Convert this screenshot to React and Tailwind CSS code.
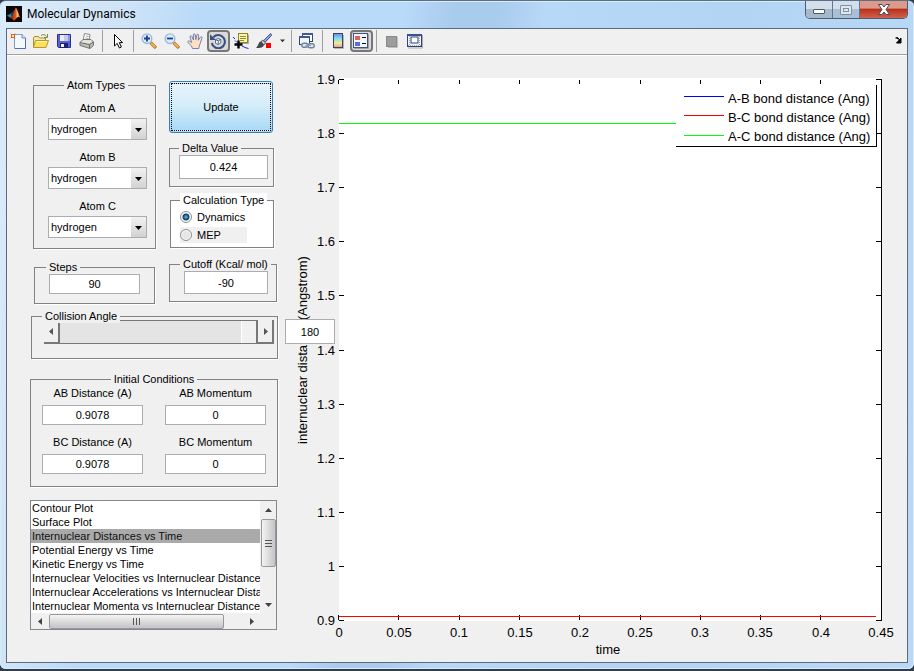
import React, { useState } from "react";

const EDIT =
  "block border border-[#abadb3] bg-white text-center text-[11px] leading-[14px] text-black outline-none";
const GROUP = "min-w-0 border border-[#828282] shadow-[1px_1px_0_#fff]";
const LEGEND = "px-[3px] leading-[14px] whitespace-nowrap bg-[#f0f0f0]";

function MatlabLogo() {
  return (
    <svg width="16" height="16" viewBox="0 0 16 16" aria-hidden="true">
      <defs>
        <linearGradient id="flame" x1="0" y1="0" x2="1" y2="0">
          <stop offset="0" stopColor="#8c1a08" />
          <stop offset="0.5" stopColor="#e8571c" />
          <stop offset="0.65" stopColor="#ffc06a" />
          <stop offset="1" stopColor="#a32a0c" />
        </linearGradient>
      </defs>
      <rect width="16" height="16" fill="#0a0806" />
      <path d="M1 9.5L5 7.5L8 4.5L6.5 10.5L4.5 12Z" fill="#3a7d9c" />
      <path d="M5 7.5L7.5 5L9 2L7 10L5.5 11Z" fill="#1c3a55" />
      <path d="M4.5 12C7 11 8 5 9.7 1.5C11.5 3 12.5 9 15 12.2C13.5 11 12 10.6 10.6 12C9.5 13 9 14.5 7.6 14.5C6.5 13.5 6 12 4.5 12Z" fill="url(#flame)" />
    </svg>
  );
}

const icons = {
  new: (
    <>
      <path d="M4.5 1.5H12L15.5 5V15.5H4.5Z" fill="#f4f8ff" stroke="#7f9bcf" />
      <path d="M15.5 5V15.5H5" fill="none" stroke="#4d6fb5" />
      <path d="M12 1.5V5H15.5" fill="#d3e0f8" stroke="#6e8cc5" />
      <path d="M0.5 0.5L5.5 5.5M5.5 0.5L0.5 5.5" stroke="#e0a070" />
      <rect x="1.5" y="1.5" width="3" height="3" fill="#fff1b0" stroke="#d0602a" strokeWidth="1" />
    </>
  ),
  open: (
    <>
      <path d="M0.5 14.5V4.5L2 3.5H5.5L6.5 5H12.5V14" fill="#f6e9a2" stroke="#a98f2c" />
      <path d="M8 2.5C10 1 12 1.5 13.5 3.5M14.5 1V4.5H11" fill="none" stroke="#7b8a45" />
      <path d="M0.5 14.5L2.5 7.5H15.5L13 14.5Z" fill="#fbe05f" stroke="#b8962a" />
      <path d="M3.5 8.5H14" stroke="#fff6bd" />
    </>
  ),
  save: (
    <>
      <path d="M1.5 1.5H14.5V14.5H2.5L1.5 13.5Z" fill="#5a61d2" stroke="#2b2f91" />
      <rect x="4" y="2" width="8" height="6" fill="#e8ecfa" />
      <rect x="8" y="2" width="4" height="6" fill="#c4cbe8" />
      <rect x="12" y="2" width="2" height="6" fill="#9095e4" />
      <rect x="4" y="10" width="8" height="5" fill="#1d2270" />
      <rect x="5" y="11" width="3" height="3" fill="#f4f6ff" />
    </>
  ),
  print: (
    <>
      <path d="M4 8L5.5 0.5L11 1.5L10 8" fill="#fff" stroke="#888" />
      <path d="M7 3L9.6 3.6M6.4 5L9.4 5.6" stroke="#aaa" />
      <path d="M1 9.5L4 6.5H12L14.5 9V12.5L11 15.5L1 12.5Z" fill="#b9b9b5" stroke="#777" />
      <path d="M1 9.5L10.5 11.5L14.5 9M10.5 11.5V15" fill="none" stroke="#666" />
      <path d="M2 9.2L4.3 7H11.7L13.5 8.8L10.4 10.7Z" fill="#e2e2de" />
      <rect x="7" y="12" width="2" height="1" fill="#e3cf3e" />
    </>
  ),
  pointer: <path d="M4.5 1.5V13L7.2 10.4L9.4 15L11.4 14L9.3 9.6H12.5Z" fill="#fff" stroke="#000" />,
  zoomin: (
    <>
      <path d="M9.5 9.5L15 15" stroke="#a8752a" strokeWidth="3.2" />
      <path d="M10 10L14.4 14.2" stroke="#f5b04a" strokeWidth="2" />
      <circle cx="6" cy="5.7" r="4.8" fill="#d9f0fb" stroke="#9db6e2" strokeWidth="1.4" />
      <path d="M3 5.5H9M6 2.5V8.5" stroke="#1b3c8c" strokeWidth="1.8" />
    </>
  ),
  zoomout: (
    <>
      <path d="M9.5 9.5L15 15" stroke="#a8752a" strokeWidth="3.2" />
      <path d="M10 10L14.4 14.2" stroke="#f5b04a" strokeWidth="2" />
      <circle cx="6" cy="5.7" r="4.8" fill="#d9f0fb" stroke="#9db6e2" strokeWidth="1.4" />
      <path d="M3 5.5H9" stroke="#1b3c8c" strokeWidth="1.8" />
    </>
  ),
  pan: (
    <path
      d="M5.5 15.5L4.5 13L0.8 9.4C0.5 8 2 7.4 3 8.4L4.6 9.6L3 4C3 2.6 4.4 2.4 5 3.6L6.5 7L6.3 1.8C6.6 0.4 8 0.4 8.3 1.8L8.8 6.6L9.8 2C10.2 0.8 11.6 1 11.6 2.4L11.3 7.2L13.4 4.2C14.2 3.2 15.5 4 15 5.2L13.2 10.5L12.3 13L11.8 15.5Z"
      fill="#fde0c0"
      stroke="#6478b0"
      strokeWidth="0.9"
    />
  ),
  rotate: (
    <>
      <path d="M3.4 4.2A6.6 6.6 0 1 1 1.8 10" fill="none" stroke="#3a5080" strokeWidth="2.1" />
      <path d="M0 1.2V7H6Z" fill="#3a5080" />
      <path d="M5.5 6.8L8 5.5L10.8 6.5V10L8.3 11.5L5.5 10.3ZM5.5 6.8L8.3 7.8L10.8 6.5M8.3 7.8V11.5" fill="#f6f8fc" stroke="#4c6088" strokeWidth="0.9" />
    </>
  ),
  data: (
    <>
      <path d="M15.5 1.5V10.5H7" fill="none" stroke="#a8a8a0" />
      <rect x="5.5" y="0.5" width="9" height="9" fill="#fbf6a4" stroke="#8b842c" />
      <path d="M7 3.5H13M7 5.5H13M7 7.5H11" stroke="#8f8a4a" />
      <path d="M0 4L2 6M2 7.5L4 9.5M9 13L12 14.5L15.5 15.5" fill="none" stroke="#1b25d4" />
      <path d="M1.5 11.5H9.5M5.5 7.5V15.5" stroke="#000" strokeWidth="2.4" />
    </>
  ),
  brush: (
    <>
      <path d="M14.6 0.6L7.5 7.8L9 9.4L15.6 2.2Z" fill="#a0acf0" stroke="#36408c" />
      <path d="M6.5 7L9.6 10L8 12L5 9Z" fill="#ccc" stroke="#555" />
      <path d="M5 8.6C2 9 3 12.5 0 14.8C3.5 15.5 7.5 15 8 11.8Z" fill="#43474e" />
      <rect x="10" y="10" width="5" height="5" fill="#fb0000" />
    </>
  ),
  link: (
    <>
      <rect x="3.5" y="0.5" width="10" height="8" fill="#fff" stroke="#2d477f" />
      <rect x="3" y="0" width="11" height="2" fill="#3c5a9a" />
      <rect x="0.5" y="3.5" width="10" height="8" fill="#f2f6fd" stroke="#2d477f" />
      <rect x="0" y="3" width="11" height="2" fill="#3c5a9a" />
      <rect x="2.8" y="10.2" width="6" height="4" rx="2" fill="#e4eaf2" stroke="#70849c" strokeWidth="1.4" />
      <rect x="9" y="10.8" width="6.2" height="4" rx="2" fill="#e4eaf2" stroke="#70849c" strokeWidth="1.4" />
      <path d="M6.5 12.4H12" stroke="#91a2b8" strokeWidth="1.4" />
    </>
  ),
  colorbar: (
    <>
      <defs>
        <linearGradient id="cbar" x1="0" y1="0" x2="0" y2="1">
          <stop offset="0" stopColor="#7489e8" />
          <stop offset="0.35" stopColor="#80dcef" />
          <stop offset="0.68" stopColor="#f2eb96" />
          <stop offset="1" stopColor="#f39a88" />
        </linearGradient>
      </defs>
      <path d="M13.5 2V15.5H4" fill="none" stroke="#b4b4b4" />
      <rect x="3.5" y="0.5" width="9" height="14" fill="url(#cbar)" stroke="#33436c" />
    </>
  ),
  legend: (
    <>
      <path d="M15.5 1V15.5H1" fill="none" stroke="#9aa0ac" />
      <rect x="0.5" y="0.5" width="14" height="14" fill="#f3f6fc" stroke="#425582" />
      <rect x="2" y="3" width="5" height="4" fill="#e3605b" />
      <rect x="2" y="9" width="5" height="4" fill="#6268e4" />
      <path d="M9 4.5H13M9 10.5H13" stroke="#111" />
    </>
  ),
  hide: (
    <>
      <path d="M13.5 4V14.5H4" fill="none" stroke="#c0c0c0" />
      <rect x="2.5" y="3.5" width="10" height="10" fill="#9d9d9d" stroke="#8a8a8a" />
    </>
  ),
  show: (
    <>
      <path d="M15.5 2V15H1" fill="none" stroke="#aaa" />
      <rect x="0.5" y="1.5" width="14" height="12" fill="#f3f5fb" stroke="#2f4576" />
      <path d="M0 2H15" stroke="#39538f" strokeWidth="2" />
      <path d="M2.5 3V13M12.5 3V13" stroke="#9ba9c5" strokeDasharray="1 1" />
      <rect x="4" y="4" width="7" height="6" fill="#fff" stroke="#2f4576" />
      <path d="M1 12.5H14" stroke="#a0a7b7" strokeDasharray="1 1" />
    </>
  ),
};

function Tool({ name, label, pressed }) {
  return (
    <button
      type="button"
      aria-label={label}
      aria-pressed={pressed}
      className={
        pressed
          ? "flex h-[22px] w-[23px] shrink-0 items-center rounded-[4px] border-2 border-[#777] bg-[#dadada] pl-px"
          : "flex h-[22px] w-[23px] shrink-0 items-center pl-[3px]"
      }
    >
      <svg width="16" height="16" viewBox="0 0 16 16" className="shrink-0" aria-hidden="true">
        {icons[name]}
      </svg>
    </button>
  );
}

function Divider() {
  return (
    <span className="flex w-2 shrink-0 pl-[3px]">
      <span className="h-[22px] w-px bg-[#a0a0a0]" />
    </span>
  );
}

function Arrow({ dir, size = 7, color = "#444" }) {
  const d = {
    up: "M0 5L3.5 1L7 5Z",
    down: "M0 2L3.5 6L7 2Z",
    left: "M5 0L1 3.5L5 7Z",
    right: "M2 0L6 3.5L2 7Z",
  }[dir];
  return (
    <svg width={size} height={size} viewBox="0 0 7 7" aria-hidden="true">
      <path d={d} fill={color} />
    </svg>
  );
}

function TitleBar() {
  return (
    <header className="flex h-[27px] items-start justify-between">
      <h1 className="flex items-center gap-[5px] pt-[5px] font-['Roboto','Open_Sans',sans-serif] text-[12px] leading-4 text-black">
        <MatlabLogo />
        Molecular Dynamics
      </h1>
      <div className="flex h-[18px] overflow-hidden rounded-b-[5px] border border-t-0 border-[#4e5d70]">
        <button type="button" aria-label="Minimize" className="flex w-[27px] items-center justify-center border-r border-[#66778c] bg-linear-to-b from-[#d3dfeb] from-45% to-[#a5b9cd] to-50%">
          <span className="mt-1 h-[5px] w-3 rounded-[1px] border border-[#4d5866] bg-white" />
        </button>
        <button type="button" aria-label="Maximize" className="flex w-[27px] items-center justify-center border-r border-[#66778c] bg-linear-to-b from-[#d3dfeb] from-45% to-[#a9bfd6] to-50%">
          <span className="flex h-[10px] w-3 items-center justify-center rounded-[1px] border border-[#8090a3] bg-[#dfe7ef]">
            <span className="h-1 w-[6px] border border-[#8090a3]" />
          </span>
        </button>
        <button type="button" aria-label="Close" className="flex w-[47px] items-center justify-center bg-linear-to-b from-[#dc9a8c] from-40% via-[#bb2f19] via-50% to-[#d0624b]">
          <svg width="12" height="11" viewBox="0 0 12 11" aria-hidden="true">
            <path d="M0.5 0.5H4L6 3L8 0.5H11.5L8 5.5L11.5 10.5H8L6 8L4 10.5H0.5L4 5.5Z" fill="#fff" stroke="#4d4a55" />
          </svg>
        </button>
      </div>
    </header>
  );
}

function Toolbar() {
  return (
    <nav aria-label="Figure toolbar" className="flex h-[26px] items-center border-b border-[#a0a0a0] pb-[2px] shadow-[0_1px_0_#fff]">
      <Tool name="new" label="New Figure" />
      <Tool name="open" label="Open File" />
      <Tool name="save" label="Save Figure" />
      <Tool name="print" label="Print Figure" />
      <Divider />
      <Tool name="pointer" label="Edit Plot" />
      <Divider />
      <Tool name="zoomin" label="Zoom In" />
      <Tool name="zoomout" label="Zoom Out" />
      <Tool name="pan" label="Pan" />
      <Tool name="rotate" label="Rotate 3D" pressed />
      <Tool name="data" label="Data Cursor" />
      <Tool name="brush" label="Brush" />
      <button type="button" aria-label="Brush options" className="flex h-[22px] w-3 items-center justify-center">
        <Arrow dir="down" size={5} color="#333" />
      </button>
      <Divider />
      <Tool name="link" label="Link Plot" />
      <Divider />
      <Tool name="colorbar" label="Insert Colorbar" />
      <Tool name="legend" label="Insert Legend" pressed />
      <Divider />
      <Tool name="hide" label="Hide Plot Tools" />
      <Tool name="show" label="Show Plot Tools" />
      <button type="button" aria-label="Dock Figure" className="mr-[5px] ml-auto">
        <svg width="7" height="7" viewBox="0 0 7 7" aria-hidden="true">
          <path d="M0.5 1L2.5 0.5L5 3.2M6 1V6H1.5Z" fill="#000" stroke="#000" />
        </svg>
      </button>
    </nav>
  );
}

function AtomSelect({ id, label }) {
  return (
    <div className="flex flex-col gap-[3px]">
      <label htmlFor={id} className="text-center leading-[14px]">
        {label}
      </label>
      <div className="relative">
        <select id={id} defaultValue="hydrogen" className="block h-[22px] w-full appearance-none border border-[#abadb3] bg-white pl-[2px] text-[11px] text-black outline-none">
          <option value="hydrogen">hydrogen</option>
        </select>
        <span className="pointer-events-none absolute inset-y-px right-px flex w-[15px] items-center justify-center bg-linear-to-b from-[#f2f2f2] to-[#d2d2d2]">
          <Arrow dir="down" color="#000" />
        </span>
      </div>
    </div>
  );
}

function CollisionAngle({ angle, setAngle }) {
  const end =
    "flex w-4 shrink-0 items-center justify-center border-r-2 border-b-2 border-[#777] bg-[#f0f0f0]";
  return (
    <fieldset className={`${GROUP} ml-px pr-[3px] pb-[14px] pl-3`}>
      <legend className={`${LEGEND} relative z-10 -ml-[2px]`}>Collision Angle</legend>
      <div className="-mt-[3px] flex h-6">
        <button type="button" aria-label="Decrease angle" className={end} onClick={() => setAngle(Math.max(0, angle - 1))}>
          <Arrow dir="left" color="#555" />
        </button>
        <input
          type="range"
          aria-label="Collision Angle"
          min="0"
          max="180"
          value={angle}
          onChange={(e) => setAngle(Number(e.target.value))}
          className="h-full min-w-0 flex-1 appearance-none border-y border-[#777] bg-[#e4e4e4] outline-none [&::-webkit-slider-thumb]:h-[22px] [&::-webkit-slider-thumb]:w-[17px] [&::-webkit-slider-thumb]:appearance-none [&::-webkit-slider-thumb]:border-r-2 [&::-webkit-slider-thumb]:border-l [&::-webkit-slider-thumb]:border-r-[#777] [&::-webkit-slider-thumb]:border-l-white [&::-webkit-slider-thumb]:bg-[#f0f0f0]"
        />
        <button type="button" aria-label="Increase angle" className={end} onClick={() => setAngle(Math.min(180, angle + 1))}>
          <Arrow dir="right" color="#555" />
        </button>
      </div>
    </fieldset>
  );
}

function Condition({ id, label, value }) {
  return (
    <div className="flex flex-col gap-[5px]">
      <label htmlFor={id} className="text-center leading-[14px]">
        {label}
      </label>
      <input id={id} defaultValue={value} className={`${EDIT} h-5 w-full`} />
    </div>
  );
}

const plots = [
  "Contour Plot",
  "Surface Plot",
  "Internuclear Distances vs Time",
  "Potential Energy vs Time",
  "Kinetic Energy vs Time",
  "Internuclear Velocities vs Internuclear Distance",
  "Internuclear Accelerations vs Internuclear Distance",
  "Internuclear Momenta vs Internuclear Distance",
];

function PlotList() {
  return (
    <div className="mt-[13px] mr-px flex flex-col border border-[#828790] bg-white">
      <div className="flex">
        <select
          size={8}
          aria-label="Plot type"
          defaultValue="Internuclear Distances vs Time"
          className="block h-[112px] min-w-0 flex-1 overflow-hidden bg-white p-0 text-[11px] text-black outline-none"
        >
          {plots.map((p) => (
            <option key={p} className="h-[14px] min-h-0 overflow-hidden px-px pt-px pb-0 leading-[14px] checked:bg-linear-to-b checked:from-[#aaaaaa] checked:to-[#aaaaaa]">
              {p}
            </option>
          ))}
        </select>
        <div className="flex w-4 shrink-0 flex-col items-center bg-[#f0f0f0]">
          <button type="button" aria-label="Scroll up" className="flex h-[18px] items-center">
            <Arrow dir="up" />
          </button>
          <span className="flex h-12 w-[15px] flex-col items-center justify-center gap-[2px] rounded-[2px] border border-[#999] bg-linear-to-r from-[#f4f4f4] to-[#c4c4c6]">
            <i className="h-px w-[7px] bg-[#555]" />
            <i className="h-px w-[7px] bg-[#555]" />
            <i className="h-px w-[7px] bg-[#555]" />
          </span>
          <button type="button" aria-label="Scroll down" className="mt-auto flex h-[18px] items-center">
            <Arrow dir="down" />
          </button>
        </div>
      </div>
      <div className="flex h-4 items-center bg-[#f0f0f0] pr-4">
        <button type="button" aria-label="Scroll left" className="flex w-[18px] justify-center">
          <Arrow dir="left" />
        </button>
        <span className="flex h-[15px] w-[175px] items-center justify-center gap-[2px] rounded-[2px] border border-[#999] bg-linear-to-b from-[#f4f4f4] to-[#c4c4c6]">
          <i className="h-[7px] w-px bg-[#555]" />
          <i className="h-[7px] w-px bg-[#555]" />
          <i className="h-[7px] w-px bg-[#555]" />
        </span>
        <button type="button" aria-label="Scroll right" className="ml-auto flex w-[18px] justify-center">
          <Arrow dir="right" />
        </button>
      </div>
    </div>
  );
}

const RADIO =
  "size-3 appearance-none rounded-full border border-[#8e8f8f] bg-[#e6e6e6] shadow-[inset_0_0_0_1px_#fff] checked:bg-[radial-gradient(circle,#5fc3ea_0,#0b3a63_3px,#f4f4f4_4px)]";

const yTicks = ["1.9", "1.8", "1.7", "1.6", "1.5", "1.4", "1.3", "1.2", "1.1", "1", "0.9"];
const xTicks = ["0", "0.05", "0.1", "0.15", "0.2", "0.25", "0.3", "0.35", "0.4", "0.45"];
const series = [
  { name: "A-B bond distance (Ang)", color: "#0000ff", y: 96, base: 103 },
  { name: "B-C bond distance (Ang)", color: "#ff0000", y: 115, base: 122 },
  { name: "A-C bond distance (Ang)", color: "#00ff00", y: 135, base: 141 },
];

function Chart() {
  return (
    <svg
      viewBox="286 55 621 607"
      role="img"
      aria-label="Internuclear distances against time"
      className="block h-auto w-full font-['Liberation_Sans',Arial,sans-serif] text-[13px]"
    >
      <rect x="339" y="78" width="543" height="543" fill="#fff" />
      <g shapeRendering="crispEdges" stroke="#000" fill="none">
        {yTicks.map((t, i) => {
          const y = Math.round(79 + i * 54.1) + 0.5;
          return <path key={t} d={`M339 ${y}H344M876 ${y}H881`} />;
        })}
        {xTicks.map((t, i) => {
          const x = Math.round(338 + i * 60.3) + 0.5;
          return <path key={t} d={`M${x} 80V84M${x} 615V620`} />;
        })}
        <path d="M881.5 79V621" />
        <path d="M339 123.5H676" stroke="#00ff00" />
        <path d="M339 616.5H876" stroke="#ff0000" />
      </g>
      {yTicks.map((t, i) => (
        <text key={t} x="335" y={Math.round(84 + i * 54.1)} textAnchor="end">
          {t}
        </text>
      ))}
      {xTicks.map((t, i) => (
        <text key={t} x={Math.round(339 + i * 60.2)} y="637" textAnchor="middle">
          {t}
        </text>
      ))}
      <text x="608" y="654" textAnchor="middle">
        time
      </text>
      <text transform="translate(307 350) rotate(-90)" textAnchor="middle">
        internuclear distance (Angstrom)
      </text>
      <rect x="676" y="86" width="200" height="60" fill="#fff" />
      <path d="M676 146.5H876.5V85" fill="none" stroke="#000" shapeRendering="crispEdges" />
      {series.map((s) => (
        <g key={s.name}>
          <path d={`M684 ${s.y}.5H724`} stroke={s.color} shapeRendering="crispEdges" />
          <text x="728" y={s.base}>
            {s.name}
          </text>
        </g>
      ))}
    </svg>
  );
}

export default function App() {
  const [angle, setAngle] = useState(180);
  return (
    <div className="min-h-screen bg-[#333d47] pb-[2px] font-['Liberation_Sans',Arial,sans-serif] text-[11px] text-black">
      <div className="flex min-h-[calc(100vh-2px)] flex-col rounded-[6px] border-t border-[#5d6f82] bg-[#b4d3f0] bg-[linear-gradient(100deg,#dcebf9_0,#d0e4f7_120px,#b9daf9_200px,#b9daf9_400px,#a9cbec_450px,#a9cbec_490px,#b7d8f7_540px,#b3d4f3_720px,#b9d9f7_100%)] px-[6px] pb-[6px] shadow-[inset_0_0_0_1px_#d6ebfc]">
        <TitleBar />
        <div className="flex flex-1 flex-col border border-[#5b6b7d] bg-[#f0f0f0]">
          <Toolbar />
          <main className="flex flex-1 items-start">
            <div className="w-[279px] shrink-0 pt-[23px] pr-2 pl-[23px]">
              <div className="flex justify-between pl-[3px]">
                <div className="flex w-[123px] flex-col gap-[11px]">
                  <fieldset className={`${GROUP} pt-[9px] pr-2 pb-[10px] pl-[14px]`}>
                    <legend className={`${LEGEND} ml-4`}>Atom Types</legend>
                    <div className="flex flex-col gap-[10px]">
                      <AtomSelect id="atom-a" label="Atom A" />
                      <AtomSelect id="atom-b" label="Atom B" />
                      <AtomSelect id="atom-c" label="Atom C" />
                    </div>
                  </fieldset>
                  <fieldset className={`${GROUP} mr-px ml-px px-[14px] pb-[9px]`}>
                    <legend className={`${LEGEND} -ml-[3px]`}>
                      <label htmlFor="steps">Steps</label>
                    </legend>
                    <input id="steps" defaultValue="90" className={`${EDIT} h-5 w-full`} />
                  </fieldset>
                </div>
                <div className="flex w-[109px] flex-col pt-[3px]">
                  <button type="button" className="mr-[5px] h-[52px] rounded-[3px] border border-[#3c7fb1] bg-linear-to-b from-[#e8f5fc] via-[#d5edfa] via-45% to-[#a7d9f5] p-px">
                    <span className="flex h-full items-center justify-center border border-dotted border-black bg-linear-to-b from-[#e5f4fc] from-0% via-[#d6edfa] via-46% to-[#a9daf6]">
                      Update
                    </span>
                  </button>
                  <fieldset className={`${GROUP} mt-2 mr-1 pr-[5px] pb-[7px] pl-[9px]`}>
                    <legend className={LEGEND}>
                      <label htmlFor="delta">Delta Value</label>
                    </legend>
                    <input id="delta" defaultValue="0.424" className={`${EDIT} h-6 w-full`} />
                  </fieldset>
                  <fieldset className={`${GROUP} mt-[6px] mr-1 ml-px bg-white pt-px pb-[4px] pl-[9px]`}>
                    <legend className="bg-white px-[3px] leading-[14px] whitespace-nowrap">Calculation Type</legend>
                    <label className="flex h-[18px] items-center gap-[5px]">
                      <input type="radio" name="calc" defaultChecked className={RADIO} />
                      Dynamics
                    </label>
                    <label className="mt-px flex h-4 w-[67px] items-center gap-[5px] bg-[#f0f0f0]">
                      <input type="radio" name="calc" className={RADIO} />
                      MEP
                    </label>
                  </fieldset>
                  <fieldset className={`${GROUP} mt-[9px] mr-px pr-2 pb-[7px] pl-[14px]`}>
                    <legend className={`${LEGEND} -mr-2 -ml-[4px]`}>
                      <label htmlFor="cutoff">Cutoff (Kcal/ mol)</label>
                    </legend>
                    <input id="cutoff" defaultValue="-90" className={`${EDIT} h-[23px] w-full`} />
                  </fieldset>
                </div>
              </div>
              <div className="relative mt-[5px]">
                <CollisionAngle angle={angle} setAngle={setAngle} />
                <input
                  aria-label="Angle in degrees"
                  value={angle}
                  onChange={(e) => setAngle(Number(e.target.value) || 0)}
                  className={`${EDIT} absolute top-[10px] left-full z-10 ml-[7px] h-[25px] w-[50px]`}
                />
              </div>
              <fieldset className={`${GROUP} mt-[13px] pr-[11px] pb-3 pl-[11px]`}>
                <legend className={`${LEGEND} mx-auto`}>Initial Conditions</legend>
                <div className="grid grid-cols-2 gap-x-[22px] gap-y-[10px]">
                  <Condition id="ab-dist" label="AB Distance (A)" value="0.9078" />
                  <Condition id="ab-mom" label="AB Momentum" value="0" />
                  <Condition id="bc-dist" label="BC Distance (A)" value="0.9078" />
                  <Condition id="bc-mom" label="BC Momentum" value="0" />
                </div>
              </fieldset>
              <PlotList />
            </div>
            <div className="min-w-0 flex-1">
              <Chart />
            </div>
          </main>
        </div>
      </div>
    </div>
  );
}
